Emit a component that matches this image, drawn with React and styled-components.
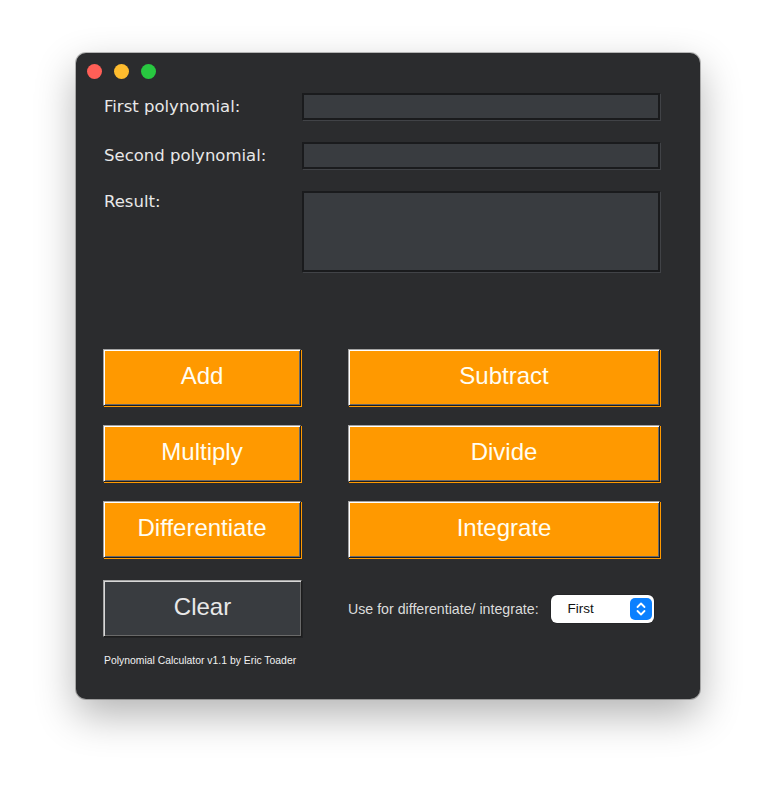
import React from 'react';
import styled, { createGlobalStyle } from 'styled-components';

const GlobalStyle = createGlobalStyle`
   html, body {
      margin: 0;
      padding: 0;
      background: #ffffff;
   }
`;

const Page = styled.div`
   padding: 53px 0 0 76px;
   min-height: 800px;
   box-sizing: border-box;
`;

const Window = styled.div`
   width: 624px;
   height: 646px;
   background: #2b2c2e;
   border-radius: 10px;
   box-shadow: 0 0 0 1px rgba(0, 0, 0, 0.25), 0 16px 40px rgba(0, 0, 0, 0.3);
   display: flex;
   flex-direction: column;
   box-sizing: border-box;
`;

const TitleBar = styled.div`
   height: 36px;
   display: flex;
   align-items: center;
   gap: 12px;
   padding-left: 11px;
`;

const Light = styled.span`
   flex: 0 0 auto;
   width: 15px;
   height: 15px;
   border-radius: 50%;
   background: ${(p) => p.color};
`;

const Content = styled.div`
   padding: 4px 0 0 27px;
   display: flex;
   flex-direction: column;
`;

const Form = styled.div`
   display: grid;
   grid-template-columns: 199px 358px;
   grid-template-rows: 27px 27px 81px;
   row-gap: 22px;
`;

const Label = styled.label`
   font-family: "DejaVu Sans", "Liberation Sans", sans-serif;
   font-size: 16.5px;
   color: #e8e8e8;
   padding-left: 1px;
   display: flex;
   align-items: ${(p) => (p.top ? 'flex-start' : 'center')};
   padding-top: ${(p) => (p.top ? '1px' : '0')};
`;

const Field = styled.div`
   background: #393c40;
   border: 2px solid #1a1b1d;
   box-shadow: 1px 1px 0 #414347;
   box-sizing: border-box;
`;

const ButtonGrid = styled.div`
   margin-top: 77px;
   display: grid;
   grid-template-columns: 199px 313px;
   grid-auto-rows: 58px;
   column-gap: 46px;
   row-gap: 18px;
`;

const Button = styled.button`
   font-family: "Liberation Sans", Arial, sans-serif;
   font-size: 24px;
   color: ${(p) => (p.dark ? '#e8e8e8' : '#fffdf2')};
   background: ${(p) => (p.dark ? '#393c40' : '#ff9900')};
   border: 1px solid;
   border-color: #a3a3a3 #1d1d1d #1d1d1d #a3a3a3;
   box-shadow: inset 1px 1px 0 ${(p) => (p.dark ? '#d8d8d8' : '#ffffff')},
      inset -1px -1px 0 #6a6a6a,
      1px 1px 0 ${(p) => (p.dark ? '#222325' : '#ff9900')};
   margin: 0 1px 1px 0;
   padding: 0 0 3px 0;
   cursor: pointer;
`;

const BottomRow = styled.div`
   margin-top: 21px;
   display: flex;
   align-items: center;
   height: 57px;
`;

const ClearButton = styled(Button)`
   width: 199px;
   height: 57px;
   margin-right: 46px;
`;

const SmallText = styled.span`
   font-family: "Liberation Sans", Arial, sans-serif;
   font-size: 14.2px;
   color: #dcdcdc;
   margin-right: 12px;
`;

const Select = styled.div`
   width: 103px;
   height: 28px;
   background: #ffffff;
   border-radius: 6px;
   box-shadow: 0 0 0 0.5px rgba(0, 0, 0, 0.3);
   display: flex;
   align-items: center;
   justify-content: space-between;
   padding: 0 2px 0 17px;
   box-sizing: border-box;
   font-family: "Liberation Sans", Arial, sans-serif;
   font-size: 13.5px;
   color: #111;
`;

const Stepper = styled.span`
   width: 22px;
   height: 22px;
   border-radius: 5px;
   background: #0b80ff;
   display: flex;
   align-items: center;
   justify-content: center;
`;

const Footer = styled.div`
   margin-top: 18px;
   font-family: "Liberation Sans", Arial, sans-serif;
   font-size: 10.4px;
   line-height: 12px;
   color: #f2f2f2;
   padding-left: 1px;
`;

const App = () => {
   return (
      <Page>
         <GlobalStyle />
         <Window>
            <TitleBar>
               <Light color="#ff5f57" />
               <Light color="#febc2e" />
               <Light color="#28c840" />
            </TitleBar>

            <Content>
               <Form>
                  <Label>First polynomial:</Label>
                  <Field />
                  <Label>Second polynomial:</Label>
                  <Field />
                  <Label top>Result:</Label>
                  <Field />
               </Form>

               <ButtonGrid>
                  <Button>Add</Button>
                  <Button>Subtract</Button>
                  <Button>Multiply</Button>
                  <Button>Divide</Button>
                  <Button>Differentiate</Button>
                  <Button>Integrate</Button>
               </ButtonGrid>

               <BottomRow>
                  <ClearButton dark>Clear</ClearButton>
                  <SmallText>Use for differentiate/ integrate:</SmallText>
                  <Select>
                     First
                     <Stepper>
                        <svg width="12" height="16" viewBox="0 0 12 16" fill="none" stroke="#fff" strokeWidth="1.8" strokeLinecap="round" strokeLinejoin="round">
                           <polyline points="2.5,6 6,2.5 9.5,6" />
                           <polyline points="2.5,10 6,13.5 9.5,10" />
                        </svg>
                     </Stepper>
                  </Select>
               </BottomRow>

               <Footer>Polynomial Calculator v1.1 by Eric Toader</Footer>
            </Content>
         </Window>
      </Page>
   );
};

export default App;
